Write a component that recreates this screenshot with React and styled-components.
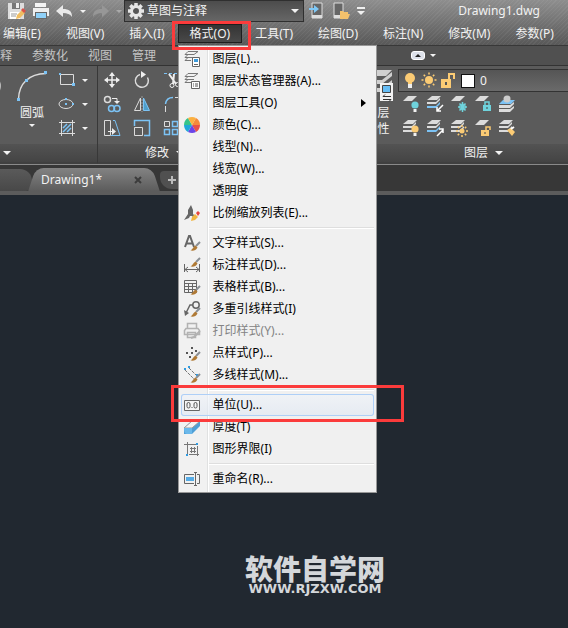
import React, { useState } from 'react';
import styled, { createGlobalStyle } from 'styled-components';

const BLUE = '#7cc3f5';
const LIGHT = '#dcdcdc';
const AMBER = '#fbcb74';
const CYAN = '#6fd3dc';

/* ---------- small shared drawings ---------- */

const Brush = () => (
  <>
    <path d="M17 8l-4 4" stroke="#8a8f94" strokeWidth="2" />
    <path d="M12.5 11.5l2 2c-1.5 3-4 3.5-7 3 2-1 2.500-3.500 5-5z" fill="#b07a35" />
  </>
);

const Sheets = ({ color = LIGHT, last = color }) => (
  <>
    <path d="M6 1h9l-4 4H1z" fill={color} />
    <path d="M1 7h9l4-4v2l-4 4H1z" fill={color} />
    <path d="M1 11h9l4-4v2l-4 4H1z" fill={last} />
  </>
);

const Sheet = () => <path d="M6 1h9l-5 5H1z" fill={LIGHT} />;

const Bulb = ({ x = 0, y = 0, color = AMBER }) => (
  <g transform={`translate(${x} ${y})`}>
    <circle cx="4" cy="4" r="3.600" fill={color} />
    <path d="M2.500 8h3v3h-3z" fill="#f2f2f2" />
  </g>
);

const Sun = ({ x = 8, y = 8, r = 3 }) => (
  <g transform={`translate(${x} ${y})`}>
    <circle r={r} fill={AMBER} />
    {[0, 45, 90, 135, 180, 225, 270, 315].map((a) => (
      <path key={a} d={`M0 ${-r - 1.5}v-2`} stroke={AMBER} strokeWidth="1.500" transform={`rotate(${a})`} />
    ))}
  </g>
);

const Padlock = ({ x = 0, y = 0, open, color = AMBER }) => (
  <g transform={`translate(${x} ${y})`}>
    <path d="M0 4h8v6H0z" fill={color} />
    <path d={open ? 'M5 4V1h4v3' : 'M2 4V1h4v3'} stroke={color} strokeWidth="1.500" />
    <path d="M3.500 6h1v2h-1z" fill="#444" />
  </g>
);

const Dot = ({ x, y }) => <path d={`M${x} ${y}h3v3h-3z`} fill={BLUE} />;

/* ---------- icons ---------- */

const icons = {
  save: (
    <>
      <path d="M0 1h16v16H0z" fill="#dedede" />
      <path d="M4 1h8v6H4z" fill="#777" />
      <path d="M8 1h3v5H8z" fill="#eee" />
      <path d="M2 10h10v7H2z" fill="#fff" />
      <path d="M3 12h6M3 14h5" stroke="#999" />
      <path d="M8 17l1-4 5-5 3 3-5 5z" fill="#f0bd62" />
      <path d="M13 8l2-2 3 3-2 2z" fill="#d9534a" />
    </>
  ),
  print: (
    <>
      <path d="M3 1h11v4H3z" fill="#f4f4f4" />
      <path d="M1 6h16v8H1z" fill="#eee" />
      <path d="M3 10h12v7H3z" fill="#666" />
      <path d="M4 11h10v5H4z" fill="#8fd0f7" />
    </>
  ),
  undo: <path d="M7 3v4c6 0 9 2 9 8-2-3-5-4-9-4v4L0 9z" fill="#e8e8e8" />,
  redo: <path d="M10 3v4c-6 0-9 2-9 8 2-3 5-4 9-4v4l7-6z" fill="#979797" />,
  gear: (
    <>
      {[0, 45, 90, 135].map((a) => (
        <path key={a} d="M9 1v16" stroke="#e6e6e6" strokeWidth="3.500" transform={`rotate(${a} 9 9)`} />
      ))}
      <circle cx="9" cy="9" r="4.500" stroke="#e6e6e6" strokeWidth="3" fill="#565656" />
    </>
  ),
  phoneIn: (
    <>
      <path d="M4 1h10v15H4z" fill="#666" stroke="#ddd" />
      <path d="M4 13h10v3H4z" fill="#ddd" />
      <path d="M1 6h5V3l5 4-5 4V8H1z" fill="#7fc8f6" />
    </>
  ),
  phoneFolder: (
    <>
      <path d="M2 1h9v15H2z" fill="#666" stroke="#ddd" />
      <path d="M2 13h9v3H2z" fill="#ddd" />
      <path d="M8 9h3l1 1h4v2h2l-2 5H8z" fill="#f3c16c" />
    </>
  ),
  overflow: <path d="M1 5h8v2H1zM1 9h8l-4 4z" fill="#f0f0f0" />,
  circle: <circle cx="12" cy="16" r="12" stroke={LIGHT} strokeWidth="1.500" />,
  arc: (
    <>
      <path d="M2.500 29C3 13 13 4 30 3.500" stroke={LIGHT} strokeWidth="1.500" />
      <Dot x={1} y={28} />
      <Dot x={9} y={9} />
      <Dot x={28} y={1} />
    </>
  ),
  rect: (
    <>
      <path d="M2.500 3.500h13v10h-13z" stroke={LIGHT} />
      <path d="M1 2h2v2H1zM14 12h3v3h-3z" fill={BLUE} />
    </>
  ),
  ellipse: (
    <>
      <ellipse cx="8" cy="9" rx="7" ry="4.500" stroke={LIGHT} />
      <path d="M7 3h2v2H7zM7 8h2v2H7zM14 8h2v2h-2z" fill={BLUE} />
    </>
  ),
  hatch: (
    <>
      <path d="M3.500 1v16M14.500 1v16M1 3.500h16M1 14.500h16" stroke={LIGHT} />
      <path d="M5 9l4-4M5 13l8-8M9 13l4-4" stroke={BLUE} strokeWidth="1.500" />
    </>
  ),
  move: (
    <>
      <path d="M9 2v14M2 9h14" stroke="#eee" strokeWidth="1.500" />
      <path d="M9 1l3 4H6zM9 17l3-4H6zM1 9l4-3v6zM17 9l-4-3v6z" fill="#eee" />
    </>
  ),
  rotate: (
    <>
      <path d="M7 3.500a6.500 6.500 0 1 0 7.500 3" stroke={LIGHT} strokeWidth="1.500" />
      <path d="M8 0l5 3.500L8 7z" fill="#eee" />
    </>
  ),
  trim: (
    <>
      <path d="M1 2.500h16" stroke={BLUE} strokeDasharray="3 2" />
      <path d="M6 3l7 10M11 3l-1 10" stroke="#eee" strokeWidth="2" />
      <circle cx="9" cy="14.500" r="2" stroke="#eee" />
      <circle cx="14.500" cy="13.500" r="2" stroke="#eee" />
    </>
  ),
  copy: (
    <>
      <circle cx="4.500" cy="4.500" r="3" stroke={LIGHT} strokeWidth="1.500" />
      <circle cx="8.500" cy="13.500" r="3" stroke={BLUE} strokeWidth="1.500" />
      <circle cx="14" cy="13.500" r="3" stroke={BLUE} strokeWidth="1.500" />
      <path d="M9 3.500h5v4" stroke="#eee" />
      <path d="M11 6h6l-3 3z" fill="#eee" />
    </>
  ),
  mirror: (
    <>
      <path d="M7.500 3v12.500h-6z" stroke={LIGHT} />
      <path d="M10.500 3v12.500h6z" fill="#4f9fcb" stroke={BLUE} />
      <path d="M9 1v16" stroke="#999" strokeDasharray="2 1" />
    </>
  ),
  fillet: (
    <>
      <path d="M2.500 9C3 5 6 2.500 10 2.500" stroke={BLUE} strokeWidth="1.500" />
      <path d="M2.500 11v6M12 2.500h5" stroke={LIGHT} />
    </>
  ),
  stretch: (
    <>
      <path d="M1.500 1.500h6v15h-6z" stroke={LIGHT} />
      <path d="M10 1.500h2l5 15H8" stroke={BLUE} />
      <path d="M5 12h4V9l4 3.500L9 16v-3H5z" fill="#eee" />
    </>
  ),
  scale: (
    <>
      <path d="M1.500 7V1.500h15v15H11" stroke={BLUE} strokeWidth="1.500" />
      <path d="M1.500 8.500h8v8h-8z" stroke={LIGHT} />
    </>
  ),
  array: (
    <>
      <path d="M1.500 2.500h5v5h-5z" stroke={LIGHT} />
      <path d="M9.500 2.500h5v5h-5zM1.500 10.500h5v5h-5zM9.500 10.500h5v5h-5z" stroke={BLUE} strokeWidth="1.500" />
    </>
  ),
  layerProps: (
    <>
      <path d="M12 0h18l-6 6H4zM4 10h16L30 2v4L20 14H4zM4 18h16L30 10v4L20 22H4z" fill="#d0d0d0" />
      <path d="M18 13h13v18H18z" fill="#f2f2f2" />
      <path d="M20.500 15.500h8v7h-8z" fill="#65bdf5" stroke="#444" />
      <path d="M21 26.500h8m-6-2l-2 2M21 29.500h8m0 0l-2 2" stroke="#333" />
    </>
  ),
  layOff: (
    <>
      <Sheet />
      <Bulb x={9} y={6} color={CYAN} />
    </>
  ),
  layIso: (
    <>
      <Sheets last={BLUE} />
      <path d="M17 10l-6 6M11 12v4h4" stroke="#fff" strokeWidth="1.500" />
    </>
  ),
  layFreeze: (
    <>
      <Sheet />
      <path d="M12.500 7v10M8 12h9M9.500 8.500l6 7M15.500 8.500l-6 7" stroke={CYAN} strokeWidth="1.500" />
      <circle cx="12.500" cy="12" r="3" stroke={CYAN} />
    </>
  ),
  layLock: (
    <>
      <Sheet />
      <Padlock x={9} y={6} color={CYAN} />
    </>
  ),
  layCurrent: (
    <>
      <path d="M5 5h12l-4 4H1z" fill={BLUE} />
      <circle cx="9" cy="4" r="3.500" fill="#ccc" />
      <path d="M1 10h11l4-3v2l-4 4H1zM1 14h11l4-3v2l-4 4H1z" fill={LIGHT} />
    </>
  ),
  layOn: (
    <>
      <Sheets />
      <Bulb x={9} y={6} />
    </>
  ),
  layUniso: (
    <>
      <Sheets last={BLUE} />
      <path d="M11 17l6-6M13 10h4v4" stroke="#fff" strokeWidth="1.500" />
    </>
  ),
  layThaw: (
    <>
      <Sheets />
      <Sun x={12} y={12} r={2.5} />
    </>
  ),
  layUnlock: (
    <>
      <Sheet />
      <Padlock x={7} y={7} open />
    </>
  ),
  layMatch: (
    <>
      <Sheets />
      <path d="M9 11l4-2 4 4-3 4z" fill={AMBER} />
      <path d="M13 10l3-2" stroke="#fff" strokeWidth="2" />
    </>
  ),
  bulb: (
    <>
      <circle cx="9" cy="6" r="5" fill={AMBER} />
      <path d="M7 9h4v3H7z" fill={AMBER} />
      <path d="M7 12h4v4H7z" fill="#eee" />
    </>
  ),
  sun: <Sun x={9} y={8} r={4} />,
  unlocked: (
    <>
      <path d="M2 7h10v9H2z" fill={AMBER} />
      <path d="M10 8V2h5v5" stroke={AMBER} strokeWidth="2" />
      <path d="M6 10h2v3H6z" fill="#555" />
    </>
  ),
  mLayer: (
    <>
      <path d="M5 1.500h10l-4 3H2zM11 7.500H2l3-3M8 10.500H2l3-3" stroke="#777" />
      <path d="M9.500 7.500h7v9h-7z" fill="#fff" stroke="#666" />
      <path d="M11 9h4v3h-4z" fill="#3d9bdc" />
      <path d="M11 14.500h4" stroke="#666" />
    </>
  ),
  mLayerState: (
    <>
      <path d="M5 1.500h10l-4 3H2zM11 7.500H2l3-3M8 10.500H2l3-3" stroke="#777" />
      <path d="M8.500 9.500h8v7h-8z" fill="#fff" stroke="#666" />
      <path d="M10 12h1m1 0h3m-5 2h1m1 0h3" stroke="#555" />
    </>
  ),
  mColor: (
    <>
      {['#f58a3c', '#e8504a', '#6b45e8', '#1fa8d8', '#35c48a', '#fbb040'].map((c, i) => (
        <path key={c} d="M9 9V1a8 8 0 0 1 6.930 4z" fill={c} transform={`rotate(${i * 60 + 30} 9 9)`} />
      ))}
    </>
  ),
  mScale: (
    <>
      <path d="M8 1l2 5v4l4 4-4-1-1-1H7l-1 2-5 2 4-6V6z" fill="#666" />
      <path d="M8 17l1-4 3-3 3 3-3 3z" fill="#f0b540" />
      <path d="M13 9l2-2 2 2-2 3z" fill="#e8453c" />
    </>
  ),
  mText: (
    <>
      <path d="M2 13L6 2h1l4 11M4 9.500h6" stroke="#666" strokeWidth="2" />
      <Brush />
    </>
  ),
  mDim: (
    <>
      <path d="M1.500 8v8M16.500 8v8M2 13.500h14M5 11l-3 2.500L5 16M13 11l3 2.500-3 2.500" stroke="#666" />
      <g transform="translate(0 -6)">
        <Brush />
      </g>
    </>
  ),
  mTable: (
    <>
      <path d="M1.500 2.500h12v12h-12zM1.500 5.500h12M1.500 8.500h12M1.500 11.500h12M5.500 6v8M9.500 6v8" stroke="#666" />
      <Brush />
    </>
  ),
  mLeader: (
    <>
      <circle cx="13" cy="5" r="3.200" stroke="#666" strokeWidth="1.500" />
      <path d="M10 5H7L3 13" stroke="#666" strokeWidth="1.500" />
      <path d="M1 10l1 6 4-3z" fill="#666" />
      <Brush />
    </>
  ),
  mPlot: (
    <g opacity="0.45">
      <path d="M4.500 6.500v-5h9v5M3 6.500h12l1.500 2v4h-15v-4zM4.500 10.500h8v5h-8z" stroke="#666" strokeWidth="1.500" />
      <path d="M17 9l-6 6-3 1" stroke="#666" strokeWidth="2" />
    </g>
  ),
  mPoint: (
    <>
      <path d="M8 3h2v2H8zM3 8h2v2H3zM8 8h2v2H8zM12 6h2v2h-2zM6 12h2v2H6z" fill="#555" />
      <Brush />
    </>
  ),
  mMline: (
    <>
      <path d="M2 4l10 10M6 2l8 8" stroke="#777" strokeDasharray="3 1" />
      <path d="M1 2h2v2H1zM5 0h2v2H5zM13 8h2v2h-2z" fill="#319be0" />
      <Brush />
    </>
  ),
  mUnits: (
    <>
      <path d="M1.500 4.500h15v10h-15z" fill="#f5f5f5" stroke="#666" />
      <rect x="4" y="6.500" width="3" height="5.500" rx="1.500" stroke="#555" />
      <rect x="11" y="6.500" width="3" height="5.500" rx="1.500" stroke="#555" />
      <path d="M8.500 11h1v1h-1z" fill="#555" />
    </>
  ),
  mThick: (
    <>
      <path d="M1 10l8-7h8v5l-8 8H1z" fill="#4f9fd6" />
      <path d="M1 10l8-7h8l-8 7z" fill="#f4f4f4" stroke="#999" />
      <path d="M1 10h8v6H4c-2 0-3-2-3-6z" fill="#6bb8ea" />
    </>
  ),
  mLimits: (
    <>
      <path d="M4.500 2v12M1 4.500h12M14.500 6v10M6 14.500h10M7 8.500h6M7 11.500h6M8.500 7v6M11.500 7v6" stroke="#777" />
      <path d="M13 3h2v2h-2zM3 14h2v2H3z" fill="#319be0" />
    </>
  ),
  mRename: (
    <>
      <path d="M11 4.500H1.500v9H11" stroke="#666" />
      <path d="M3 7h8v4H3z" fill="#56ace6" />
      <path d="M11 2.500h3m0 13h-3M12.500 3v12M14 4.500h2.500v9H14" stroke="#666" />
    </>
  ),
};

const Icon = ({ name, size = 18 }) => (
  <Glyph width={size} height={size} viewBox={`0 0 ${size} ${size}`} fill="none" aria-hidden="true">
    {icons[name]}
  </Glyph>
);

/* ---------- data ---------- */

const menusBefore = ['编辑(E)', '视图(V)', '插入(I)'];
const menusAfter = ['工具(T)', '绘图(D)', '标注(N)', '修改(M)', '参数(P)'];
const ribbonTabs = ['注释', '参数化', '视图', '管理'];

const formatMenu = [
  [
    { label: '图层(L)...', icon: 'mLayer' },
    { label: '图层状态管理器(A)...', icon: 'mLayerState' },
    { label: '图层工具(O)', sub: true },
    { label: '颜色(C)...', icon: 'mColor' },
    { label: '线型(N)...' },
    { label: '线宽(W)...' },
    { label: '透明度' },
    { label: '比例缩放列表(E)...', icon: 'mScale' },
  ],
  [
    { label: '文字样式(S)...', icon: 'mText' },
    { label: '标注样式(D)...', icon: 'mDim' },
    { label: '表格样式(B)...', icon: 'mTable' },
    { label: '多重引线样式(I)', icon: 'mLeader' },
    { label: '打印样式(Y)...', icon: 'mPlot', disabled: true },
    { label: '点样式(P)...', icon: 'mPoint' },
    { label: '多线样式(M)...', icon: 'mMline' },
  ],
  [
    { label: '单位(U)...', icon: 'mUnits', active: true },
    { label: '厚度(T)', icon: 'mThick' },
    { label: '图形界限(I)', icon: 'mLimits' },
  ],
  [{ label: '重命名(R)...', icon: 'mRename' }],
];

const modifyTools = ['move', 'rotate', 'trim', 'copy', 'mirror', 'fillet', 'stretch', 'scale', 'array'];
const layerTools = [
  'layOff', 'layIso', 'layFreeze', 'layLock', 'layCurrent',
  'layOn', 'layUniso', 'layThaw', 'layUnlock', 'layMatch',
];

/* ---------- parts ---------- */

const QuickAccess = () => {
  const [workspace, setWorkspace] = useState('草图与注释');

  return (
    <TitleBar>
      <QuickButtons>
        <ToolButton aria-label="保存"><Icon name="save" /></ToolButton>
        <ToolButton aria-label="打印"><Icon name="print" /></ToolButton>
        <ToolButton aria-label="放弃"><Icon name="undo" /></ToolButton>
        <Caret />
        <ToolButton aria-label="重做"><Icon name="redo" /></ToolButton>
        <Caret $dim />
      </QuickButtons>
      <Workspace>
        <Icon name="gear" />
        <select aria-label="工作空间" value={workspace} onChange={(e) => setWorkspace(e.target.value)}>
          <option>草图与注释</option>
        </select>
        <Caret $size={4} />
      </Workspace>
      <QuickExtras>
        <ToolButton aria-label="从移动设备打开"><Icon name="phoneIn" /></ToolButton>
        <ToolButton aria-label="保存到移动设备"><Icon name="phoneFolder" /></ToolButton>
        <ToolButton aria-label="自定义"><Icon name="overflow" /></ToolButton>
      </QuickExtras>
      <FileTitle>Drawing1.dwg</FileTitle>
    </TitleBar>
  );
};

const FormatMenu = () => (
  <Dropdown role="menu">
    {formatMenu.map((group, i) => (
      <MenuGroup key={i}>
        {group.map((item) => (
          <MenuItem key={item.label} role="menuitem" disabled={item.disabled} $active={item.active}>
            <MenuIcon>{item.icon && <Icon name={item.icon} />}</MenuIcon>
            {item.label}
            {item.sub && <SubArrow />}
            {item.active && <ItemMarker />}
          </MenuItem>
        ))}
      </MenuGroup>
    ))}
  </Dropdown>
);

const Ribbon = () => (
  <RibbonArea>
    <DrawPanel>
      <PanelBody>
        <BigTool aria-label="圆"><Icon name="circle" size={32} /></BigTool>
        <BigTool>
          <Icon name="arc" size={32} />
          <span>圆弧</span>
          <Caret />
        </BigTool>
        <DrawTools>
          {['rect', 'ellipse', 'hatch'].map((name) => (
            <SplitTool key={name} aria-label={name}>
              <Icon name={name} />
              <Caret />
            </SplitTool>
          ))}
        </DrawTools>
      </PanelBody>
      <PanelTitle $left><Caret $size={4} /></PanelTitle>
    </DrawPanel>
    <ModifyPanel>
      <ModifyTools>
        {modifyTools.map((name) => (
          <ToolButton key={name} aria-label={name}><Icon name={name} /></ToolButton>
        ))}
      </ModifyTools>
      <PanelTitle>修改<Caret $size={4} /></PanelTitle>
    </ModifyPanel>
    <FillPanel>
      <PanelBody />
      <PanelTitle />
    </FillPanel>
    <LayerPanel>
      <PanelBody>
        <LayerProps>
          <Icon name="layerProps" size={32} />
          <span>图层特性</span>
        </LayerProps>
        <LayerSide>
          <LayerCombo>
            <Icon name="bulb" />
            <Icon name="sun" />
            <Icon name="unlocked" />
            <Swatch />
            0
          </LayerCombo>
          <LayerTools>
            {layerTools.map((name) => (
              <ToolButton key={name} aria-label={name}><Icon name={name} /></ToolButton>
            ))}
          </LayerTools>
        </LayerSide>
      </PanelBody>
      <PanelTitle>图层<Caret $size={4} /></PanelTitle>
    </LayerPanel>
  </RibbonArea>
);

const App = () => (
  <>
    <GlobalStyle />
    <Window>
      <TopChrome>
        <QuickAccess />
        <MenuBar>
          {menusBefore.map((m) => <MenuButton key={m}>{m}</MenuButton>)}
          <OpenMenu>
            <MenuButton $open>格式(O)</MenuButton>
            <FormatMenu />
            <TitleMarker />
          </OpenMenu>
          {menusAfter.map((m) => <MenuButton key={m}>{m}</MenuButton>)}
        </MenuBar>
      </TopChrome>
      <RibbonTabs>
        {ribbonTabs.map((t) => <RibbonTab key={t}>{t}</RibbonTab>)}
        <RibbonToggle aria-label="最小化功能区"><span /></RibbonToggle>
        <Caret />
      </RibbonTabs>
      <Ribbon />
      <FileTabs>
        <StubTab />
        <FileTab>
          <span>Drawing1*</span>
          <CloseButton aria-label="关闭">
            <svg width="8" height="8" viewBox="0 0 8 8"><path d="M1 1l6 6M7 1L1 7" stroke="#3c3c3c" strokeWidth="2" /></svg>
          </CloseButton>
        </FileTab>
        <NewTab aria-label="新图形">
          <svg width="10" height="10" viewBox="0 0 10 10"><path d="M5 1v8M1 5h8" stroke="#bbb" strokeWidth="2" /></svg>
        </NewTab>
      </FileTabs>
      <Canvas>
        <Watermark>
          <strong>软件自学网</strong>
          <span>WWW.RJZXW.COM</span>
        </Watermark>
      </Canvas>
    </Window>
  </>
);

export default App;

/* ---------- styles ---------- */

const GlobalStyle = createGlobalStyle`
  *, *::before, *::after { box-sizing: border-box; }
  body {
    margin: 0;
    overflow: hidden;
    background: #212830;
    font: 12px/16px 'Noto Sans', 'Noto Sans CJK SC', sans-serif;
  }
  button, select {
    margin: 0;
    padding: 0;
    border: 0;
    background: none;
    color: inherit;
    font: inherit;
  }
`;

const Window = styled.div`
  display: flex;
  flex-direction: column;
  min-height: 100vh;
  overflow: hidden;
  color: #f2f2f2;
  white-space: nowrap;
`;

const Glyph = styled.svg`
  display: block;
  flex: none;
`;

const Caret = styled.i`
  flex: none;
  border: ${(props) => props.$size || 3}px solid transparent;
  border-top-color: ${(props) => (props.$dim ? '#aaa' : '#f2f2f2')};
  border-bottom: 0;
`;

const ToolButton = styled.button`
  display: flex;
  align-items: center;
  justify-content: center;
`;

const TopChrome = styled.header`
  position: relative;
  z-index: 2;
  background:
    repeating-linear-gradient(135deg, rgba(255, 255, 255, 0.05) 0 1px, transparent 1px 3px),
    linear-gradient(#8e8e8e, #585858);
`;

const TitleBar = styled.div`
  display: flex;
  align-items: center;
  height: 22px;
`;

const QuickButtons = styled.div`
  display: flex;
  align-items: center;
  gap: 6px;
  width: 124px;
  padding-left: 8px;
`;

const Workspace = styled.label`
  display: flex;
  align-items: center;
  gap: 2px;
  width: 180px;
  height: 22px;
  padding: 0 4px 0 2px;
  border: 1px solid #2f2f2f;
  background: linear-gradient(#4c4c4c, #666);

  select {
    flex: 1;
    appearance: none;
  }
`;

const QuickExtras = styled.div`
  display: flex;
  gap: 6px;
  padding-left: 4px;
`;

const FileTitle = styled.span`
  flex: 1;
  padding-right: 28px;
  text-align: right;
`;

const MenuBar = styled.nav`
  display: flex;
  gap: 1px;
  align-items: center;
  height: 23px;
  margin-left: -9px;
`;

const MenuButton = styled.button`
  height: 19px;
  padding: 0 12px;
  ${(props) => props.$open && 'background: linear-gradient(#333, #4a4a4a); box-shadow: inset 0 0 0 1px #1e1e1e;'}
`;

const OpenMenu = styled.div`
  position: relative;
  display: flex;
  align-items: center;
  height: 23px;
`;

const Marker = styled.div`
  position: absolute;
  border: 3px solid #fb3b3b;
  pointer-events: none;
`;

const TitleMarker = styled(Marker)`
  inset: -1px -9px -5px -6px;
`;

const ItemMarker = styled(Marker)`
  inset: -9px -30px -6px -10px;
  z-index: 1;
`;

const Dropdown = styled.div`
  position: absolute;
  top: 100%;
  left: 0;
  width: 199px;
  padding: 2px;
  border: 1px solid #979797;
  background: linear-gradient(to right, #f1f1f1 28px, #e0e1e1 28px 29px, #fff 29px 30px, #f0f0f0 30px);
  color: #000;
`;

const MenuGroup = styled.div`
  & + &::before {
    content: '';
    display: block;
    height: 2px;
    margin: 3px 0 3px 28px;
    border-top: 1px solid #dedede;
    border-bottom: 1px solid #fff;
  }
`;

const MenuItem = styled.button`
  position: relative;
  display: flex;
  align-items: center;
  gap: 10px;
  width: 100%;
  height: 22px;
  text-align: left;
  ${(props) =>
    props.$active &&
    `
      border-radius: 3px;
      box-shadow: inset 0 0 0 1px #aecff7;
      background: linear-gradient(rgba(240, 244, 250, 0.6), rgba(222, 231, 243, 0.6));
    `}

  &:disabled {
    color: #838383;
  }
`;

const MenuIcon = styled.span`
  display: flex;
  justify-content: center;
  width: 22px;
`;

const SubArrow = styled.i`
  margin-left: auto;
  margin-right: 8px;
  border: 4px solid transparent;
  border-left: 5px solid #000;
  border-right: 0;
`;

const RibbonTabs = styled.nav`
  display: flex;
  align-items: center;
  height: 21px;
  margin-left: -22px;
  border-top: 1px solid #383838;
  border-bottom: 1px solid #333;
  background: #505050;
  color: #c4c4c4;
`;

const RibbonTab = styled.button`
  padding: 0 10px;
`;

const RibbonToggle = styled.button`
  display: flex;
  align-items: center;
  justify-content: center;
  width: 14px;
  height: 9px;
  margin: 0 5px 0 245px;
  border: 1px solid #fff;
  border-radius: 3px;
  background: #dde1ea;

  span {
    border: 3px solid transparent;
    border-top: 0;
    border-bottom-color: #222;
  }
`;

const RibbonArea = styled.section`
  display: flex;
  height: 99px;
  border-bottom: 1px solid #8a8a8a;
  background: #5b5b5b;
`;

const Panel = styled.div`
  display: flex;
  flex: none;
  flex-direction: column;
  border-right: 1px solid #383838;
  border-bottom: 2px solid #404040;
`;

const DrawPanel = styled(Panel)`
  width: 98px;
  overflow: hidden;
`;

const ModifyPanel = styled(Panel)`
  width: 134px;
`;

const FillPanel = styled(Panel)`
  flex: 1;
`;

const LayerPanel = styled(Panel)`
  width: 258px;
  margin-right: -45px;
`;

const PanelBody = styled.div`
  display: flex;
  flex: 1;
  justify-content: flex-end;
`;

const PanelTitle = styled.div`
  display: flex;
  align-items: center;
  justify-content: ${(props) => (props.$left ? 'flex-start' : 'center')};
  gap: 7px;
  height: 18px;
  padding: 0 3px;
  background: linear-gradient(#535353, #444);
`;

const BigTool = styled.button`
  display: flex;
  flex: none;
  flex-direction: column;
  align-items: center;
  gap: 3px;
  width: 40px;
  padding-top: 4px;
`;

const DrawTools = styled.div`
  display: grid;
  align-content: start;
  gap: 6px;
  padding: 5px 9px 0 6px;
`;

const SplitTool = styled.button`
  display: flex;
  align-items: center;
  gap: 6px;
`;

const ModifyTools = styled.div`
  display: grid;
  flex: 1;
  grid-template-columns: repeat(3, 18px);
  align-content: start;
  gap: 6px 12px;
  padding: 5px 0 0 5px;
`;

const LayerProps = styled.button`
  display: flex;
  flex-direction: column;
  align-items: center;
  gap: 3px;
  width: 43px;
  padding: 4px 0 0 2px;

  span {
    width: 24px;
    white-space: normal;
  }
`;

const LayerSide = styled.div`
  flex: 1;
`;

const LayerCombo = styled.div`
  display: flex;
  align-items: center;
  gap: 1px;
  height: 23px;
  margin-top: 3px;
  padding-left: 2px;
  border: 1px solid #333;
  background: linear-gradient(#555, #6a6a6a);
`;

const Swatch = styled.span`
  width: 14px;
  height: 14px;
  margin: 0 4px 0 3px;
  border: 1px solid #111;
  background: #fff;
`;

const LayerTools = styled.div`
  display: grid;
  grid-template-columns: repeat(5, 18px);
  gap: 6px;
  padding: 3px 4px;
`;

const FileTabs = styled.div`
  display: flex;
  align-items: flex-end;
  height: 30px;
  padding-top: 3px;
  border-bottom: 4px solid #5c5c5c;
  background: #373737;
`;

const StubTab = styled.div`
  width: 32px;
  height: 22px;
  border-radius: 0 12px 6px 0;
  background: linear-gradient(#5a5a5a, #484848);
`;

const FileTab = styled.div`
  position: relative;
  z-index: 0;
  display: flex;
  align-items: center;
  justify-content: space-between;
  width: 124px;
  height: 23px;
  padding: 0 14px 0 9px;

  &::before,
  &::after {
    content: '';
    position: absolute;
    z-index: -1;
    top: 0;
    bottom: 0;
    background: linear-gradient(#838383, #5c5c5c);
  }

  &::before {
    left: 0;
    right: 50%;
    border-radius: 8px 0 0 0;
    transform: skewX(-18deg);
  }

  &::after {
    left: 40%;
    right: 0;
    border-radius: 0 8px 0 0;
    transform: skewX(18deg);
  }
`;

const CloseButton = styled.button`
  display: flex;
`;

const NewTab = styled.button`
  display: flex;
  align-items: center;
  justify-content: center;
  width: 24px;
  height: 18px;
  margin: 0 0 2px 4px;
  border-radius: 4px 4px 4px 12px;
  background: #505050;
`;

const Canvas = styled.main`
  display: flex;
  flex: 1;
  flex-direction: column;
  align-items: center;
  justify-content: flex-end;
  padding: 0 0 34px 62px;
  background: #212830;
`;

const Watermark = styled.div`
  display: flex;
  flex-direction: column;
  align-items: center;
  color: #d4d7da;

  strong {
    font: 900 28px/32px 'Noto Sans CJK SC', sans-serif;
  }

  span {
    font: bold 13px/10px 'DejaVu Sans', sans-serif;
  }
`;
